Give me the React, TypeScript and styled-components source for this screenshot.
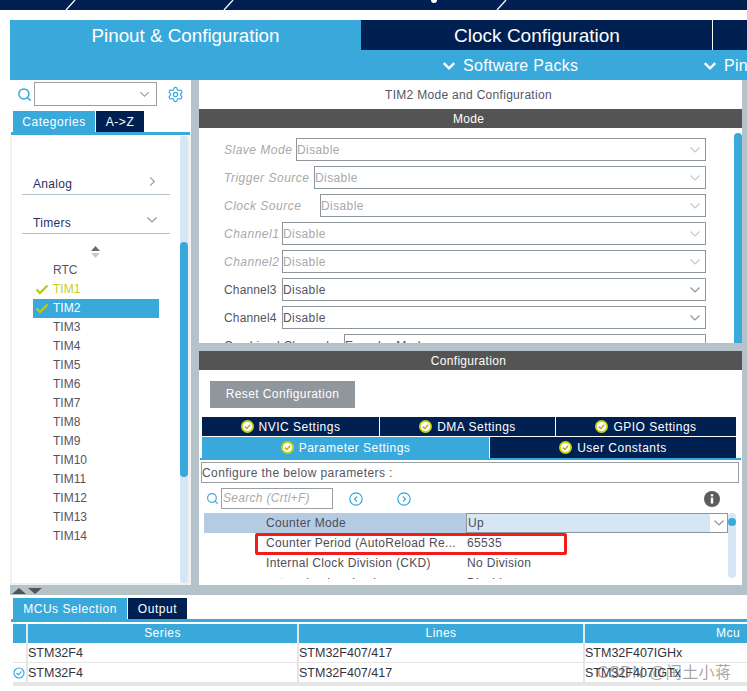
import React from "react";
import styled, { createGlobalStyle } from "styled-components";
import { Search, Settings } from "lucide-react";

const BLUE = "#39a9dc";
const NAVY = "#002052";
const DARK = "#535453";
const GUT = "#b6c2c9";
const FONT = `"Liberation Sans", Arial, sans-serif`;

const Global = createGlobalStyle`
  html, body { margin: 0; padding: 0; background: #fff; }
  * { box-sizing: border-box; }
`;

const Page = styled.div`
  width: 747px;
  height: 691px;
  overflow: hidden;
  background: #fff;
  font-family: ${FONT};
  font-size: 12px;
  color: #4d4d57;
`;

const TopBar = styled.div`
  height: 10px;
  margin-bottom: 10px;
  background: ${NAVY};
  svg { display: block; }
`;

const Header = styled.header`
  display: grid;
  grid-template-columns: 351px 1fr;
  margin-left: 10px;
  height: 60px;
  background: ${BLUE};
  color: #fff;
`;

const PinoutTab = styled.div`
  font-size: 18.8px;
  line-height: 32px;
  text-align: center;
`;

const HeaderRight = styled.div`
  display: flex;
  flex-direction: column;
  min-width: 0;
`;

const MainTabs = styled.div`
  display: flex;
  height: 30px;
  background: ${NAVY};
  padding-left: 1px;
`;

const ClockTab = styled.div`
  width: 351px;
  font-size: 19px;
  line-height: 32px;
  text-align: center;
  border-right: 1px solid #fff;
`;

const SubNav = styled.div`
  display: flex;
  height: 30px;
  padding: 2px 0 0 81px;
  align-items: center;
  font-size: 16px;
  letter-spacing: 0.3px;
  white-space: nowrap;
`;

const SubItem = styled.div<{ $w?: number }>`
  display: flex;
  align-items: center;
  gap: 7px;
  flex: none;
  width: ${(p) => (p.$w ? `${p.$w}px` : "auto")};
`;

const Workspace = styled.div`
  margin-left: 10px;
  background: ${GUT};
`;

const Panes = styled.div`
  display: flex;
  height: 505px;
  gap: 8px;
`;

const LeftPane = styled.aside`
  width: 181px;
  flex: none;
  background: #fff;
  display: flex;
  flex-direction: column;
`;

const SearchRow = styled.div`
  display: flex;
  align-items: center;
  height: 31px;
  padding: 1px 0 4px 7px;
  color: ${BLUE};
`;

const Combo = styled.div`
  width: 123px;
  height: 24px;
  margin-left: 2px;
  margin-right: 10px;
  border: 1px solid #9a9fa3;
  display: flex;
  align-items: center;
  justify-content: flex-end;
  padding-right: 6px;
`;

const TabStrip = styled.div<{ $ml: number }>`
  display: flex;
  gap: 1px;
  height: 21px;
  margin-left: ${(p) => p.$ml}px;
  flex: none;
`;

const Tab = styled.div<{ $active?: boolean; $w: number }>`
  width: ${(p) => p.$w}px;
  background: ${(p) => (p.$active ? BLUE : NAVY)};
  color: #fff;
  text-align: center;
  font-size: 12px;
  letter-spacing: 0.55px;
  line-height: 22px;
`;

const BlueLine = styled.div`
  height: 3px;
  margin: 0 1px;
  background: ${BLUE};
  flex: none;
`;

const ListArea = styled.div`
  flex: 1;
  display: flex;
  min-height: 0;
  margin-top: 1px;
  padding: 0 3px 2px 2px;
  background: #f1f1f1;
`;

const ListInner = styled.div`
  flex: 1;
  background: #fff;
  padding: 31px 0 0 10px;
`;

const ListScroll = styled.div`
  width: 8px;
  flex: none;
  border-radius: 4px;
  background: #d6e6f4;
  padding-top: 106px;
  div {
    height: 235px;
    border-radius: 4px;
    background: ${BLUE};
  }
`;

const Category = styled.div<{ $gap: number }>`
  width: 148px;
  height: 28px;
  display: flex;
  align-items: flex-end;
  justify-content: space-between;
  padding: 0 12px 3px 11px;
  margin-bottom: ${(p) => p.$gap}px;
  border-bottom: 1px solid #b6c2c9;
  color: #2c2c66;
  font-size: 12px;
  letter-spacing: 0.3px;
  svg { margin-bottom: 4px; }
`;

const SortArrows = styled.div`
  padding: 12px 0 0 69px;
  height: 27px;
  svg { display: block; }
`;

const TimerRow = styled.div<{ $selected?: boolean; $used?: boolean }>`
  position: relative;
  width: 126px;
  height: 19px;
  margin-left: 11px;
  padding-left: 20px;
  line-height: 19px;
  font-size: 12px;
  background: ${(p) => (p.$selected ? BLUE : "transparent")};
  color: ${(p) => (p.$selected ? "#fff" : p.$used ? "#c3cf16" : "#55555f")};
  svg { position: absolute; left: 2px; top: 4px; }
`;

const CenterCol = styled.main`
  width: 543px;
  flex: none;
  display: flex;
  flex-direction: column;
  gap: 8px;
`;

const TopPanel = styled.section`
  height: 263px;
  overflow: hidden;
  background: #fff;
  display: flex;
  flex-direction: column;
`;

const PanelTitle = styled.div`
  height: 29px;
  line-height: 30px;
  text-align: center;
  font-size: 12px;
  color: #55555f;
  letter-spacing: 0.3px;
  padding-right: 4px;
  flex: none;
`;

const DarkHeader = styled.div`
  height: 19px;
  line-height: 20px;
  padding-right: 4px;
  text-align: center;
  background: ${DARK};
  color: #fff;
  font-size: 12px;
  flex: none;
  letter-spacing: 0.3px;
`;

const ModeBody = styled.div`
  flex: 1;
  display: flex;
  min-height: 0;
  padding-top: 5px;
`;

const ModeRows = styled.div`
  flex: 1;
  padding: 5px 0 0 25px;
`;

const ModeRow = styled.div`
  display: flex;
  align-items: center;
  height: 23px;
  margin-bottom: 5px;
`;

const ModeLabel = styled.div<{ $w: number; $off?: boolean }>`
  width: ${(p) => p.$w}px;
  flex: none;
  white-space: nowrap;
  font-style: ${(p) => (p.$off ? "italic" : "normal")};
  letter-spacing: ${(p) => (p.$off ? "0.5px" : "0.15px")};
  color: ${(p) => (p.$off ? "#a8a8a8" : "#55555f")};
  font-size: 12px;
`;

const ModeSelect = styled.div<{ $off?: boolean }>`
  flex: 1;
  margin-right: 28px;
  height: 23px;
  border: 1px solid #8f969b;
  display: flex;
  align-items: center;
  justify-content: space-between;
  padding: 0 4px 0 0;
  font-size: 12px;
  letter-spacing: 0.4px;
  color: ${(p) => (p.$off ? "#a8a8a8" : "#55555f")};
`;

const ModeScroll = styled.div`
  width: 8px;
  flex: none;
  background: ${BLUE};
  border-radius: 4px 4px 0 0;
`;

const BottomPanel = styled.section`
  height: 234px;
  background: #fff;
  overflow: hidden;
  display: flex;
  flex-direction: column;
`;

const ResetButton = styled.div`
  width: 145px;
  height: 27px;
  flex: none;
  margin: 11px 0 9px 11px;
  background: #8f969c;
  color: #fff;
  font-size: 12px;
  letter-spacing: 0.4px;
  line-height: 27px;
  text-align: center;
`;

const SettingsTabs = styled.div`
  display: grid;
  grid-template-columns: 177px 175px 180px;
  grid-template-rows: 19px;
  gap: 1px;
  margin-left: 3px;
  flex: none;
`;

const SettingsTabs2 = styled.div`
  display: grid;
  grid-template-columns: 287px 246px;
  gap: 1px;
  margin: 1px 0 0 3px;
  flex: none;
  height: 21px;
`;

const SetTab = styled.div<{ $active?: boolean }>`
  display: flex;
  align-items: center;
  justify-content: center;
  gap: 5px;
  background: ${(p) => (p.$active ? BLUE : NAVY)};
  color: #fff;
  font-size: 12px;
  letter-spacing: 0.5px;
`;

const ThinLine = styled.div`
  height: 2px;
  margin: 0 1px;
  background: ${BLUE};
  flex: none;
`;

const ConfigureBox = styled.div`
  height: 21px;
  margin: 2px 3px 0 2px;
  border: 1px solid #9a9fa3;
  line-height: 20px;
  font-size: 12px;
  letter-spacing: 0.42px;
  color: #55555f;
  flex: none;
`;

const ParamToolbar = styled.div`
  height: 30px;
  display: flex;
  align-items: center;
  padding: 1px 0 0 7px;
  flex: none;
  color: ${BLUE};
`;

const ParamSearch = styled.div`
  width: 112px;
  height: 21px;
  margin: 0 16px 0 2px;
  border: 1px solid #9a9fa3;
  font-style: italic;
  font-size: 12px;
  letter-spacing: 0.3px;
  line-height: 19px;
  padding-left: 1px;
  color: #aaa;
`;

const CircleGap = styled.div`
  width: 34px;
  flex: none;
`;

const InfoSlot = styled.div`
  margin-left: 293px;
  display: flex;
`;

const ParamBody = styled.div`
  flex: 1;
  display: flex;
  min-height: 0;
  padding: 0 6px 6px 5px;
`;

const ParamTable = styled.div`
  position: relative;
  width: 524px;
  flex: none;
  overflow: hidden;
`;

const ParamRow = styled.div<{ $head?: boolean }>`
  display: grid;
  grid-template-columns: 262px 1fr;
  height: 20px;
  line-height: 19px;
  font-size: 12px;
  letter-spacing: 0.33px;
  color: #4d4d57;
  background: ${(p) => (p.$head ? "#b5cbe2" : "transparent")};
`;

const ParamName = styled.div`
  padding: 1px 0 0 62px;
  white-space: nowrap;
`;

const ParamValue = styled.div`
  padding: 1px 0 0 1px;
  white-space: nowrap;
`;

const ParamSelect = styled.div`
  display: flex;
  justify-content: space-between;
  height: 20px;
  border: 1px solid #8f969b;
  background: #d6e6f4;
  padding-left: 1px;
  line-height: 18px;
`;

const ChevronBox = styled.div`
  width: 17px;
  background: #fff;
  display: flex;
  align-items: center;
  justify-content: center;
`;

const Highlight = styled.div`
  position: absolute;
  left: 51px;
  top: 20px;
  width: 312px;
  height: 22px;
  border: 3px solid #f11c1c;
  border-radius: 2px;
`;

const ParamScroll = styled.div`
  width: 8px;
  flex: none;
  height: 65px;
  background: #d6e6f4;
  border-radius: 4px;
  padding-top: 5px;
  div {
    height: 8px;
    border-radius: 50%;
    background: ${BLUE};
  }
`;

const RightGutter = styled.div`
  flex: 1;
  overflow: hidden;
  svg { display: block; margin-top: 5px; }
`;

const Splitter = styled.div`
  height: 10px;
  padding: 3px 0 0 2px;
  svg { display: block; }
`;

const Dock = styled.section`
  position: relative;
  margin-left: 10px;
  padding-top: 3px;
  height: 91px;
`;

const DockBlueLine = styled.div`
  height: 3px;
  margin: 0 0 2px 1px;
  background: ${BLUE};
`;

const McuTable = styled.div`
  display: grid;
  grid-template-columns: 13px 269px 284px 286px;
  grid-auto-rows: 19px 20px 20px;
  column-gap: 2px;
  padding: 0 0 3px 3px;
  width: max-content;
  background: linear-gradient(#fff, #fff) left top / 3px 100% no-repeat, #e6e6e6;
`;

const HeadCell = styled.div`
  background: ${BLUE};
  color: #fff;
  font-size: 12px;
  letter-spacing: 0.45px;
  line-height: 19px;
  text-align: center;
`;

const BodyCell = styled.div`
  background: #fff;
  margin-bottom: 1px;
  padding-top: 1px;
  color: #33333b;
  font-size: 12.5px;
  line-height: 19px;
  display: flex;
  align-items: center;
  white-space: nowrap;
  overflow: hidden;
`;

const Watermark = styled.div`
  position: absolute;
  left: 587px;
  top: 69px;
  font-size: 16px;
  line-height: 18px;
  letter-spacing: 0.45px;
  white-space: nowrap;
  color: rgba(90, 90, 90, 0.55);
  font-family: "Liberation Sans", "Noto Sans CJK SC", sans-serif;
`;

const Chev = ({ dir = "down", size = 12, color = "#8f969b", w = 1.2 }: { dir?: "down" | "right"; size?: number; color?: string; w?: number }) => (
  <svg width={size} height={size} viewBox="0 0 12 12" fill="none" stroke={color} strokeWidth={w}>
    <polyline points={dir === "down" ? "1.5,3.5 6,8 10.5,3.5" : "3.5,1.5 8,6 3.5,10.5"} />
  </svg>
);

const Tick = ({ color = "#bccb10" }: { color?: string }) => (
  <svg width="14" height="11" viewBox="0 0 14 11" fill="none" stroke={color} strokeWidth="2.4">
    <polyline points="1.5,5.5 5,9 12.5,1.5" />
  </svg>
);

const OkBadge = () => (
  <svg width="13" height="13" viewBox="0 0 13 13">
    <circle cx="6.5" cy="6.5" r="6.5" fill="#c6d313" />
    <circle cx="6.5" cy="6.5" r="4.6" fill="#fff" />
    <polyline points="3.8,6.6 5.8,8.5 9.2,4.8" fill="none" stroke="#a9b70f" strokeWidth="1.5" />
  </svg>
);

const CircleArrow = ({ left }: { left?: boolean }) => (
  <svg width="14" height="14" viewBox="0 0 14 14" fill="none" stroke={BLUE} strokeWidth="1.2">
    <circle cx="7" cy="7" r="6.2" />
    <polyline points={left ? "8,4.5 5.5,7 8,9.5" : "6,4.5 8.5,7 6,9.5"} />
  </svg>
);

const InfoIcon = () => (
  <svg width="16" height="16" viewBox="0 0 16 16">
    <circle cx="8" cy="8" r="8" fill="#5c5c5c" />
    <rect x="6.8" y="6.6" width="2.4" height="6" fill="#fff" />
    <rect x="6.8" y="3.2" width="2.4" height="2.2" fill="#fff" />
  </svg>
);

const modeRows = [
  { label: "Slave Mode", w: 72, off: true },
  { label: "Trigger Source", w: 90, off: true },
  { label: "Clock Source", w: 96, off: true },
  { label: "Channel1", w: 58, off: true },
  { label: "Channel2", w: 58, off: true },
  { label: "Channel3", w: 58 },
  { label: "Channel4", w: 58 },
];

const timers = ["TIM3", "TIM4", "TIM5", "TIM6", "TIM7", "TIM8", "TIM9", "TIM10", "TIM11", "TIM12", "TIM13", "TIM14"];

export default function App() {
  return (
    <Page>
      <Global />
      <TopBar>
        <svg width="747" height="10" viewBox="0 0 747 10">
          <g stroke="#fff" strokeWidth="1.3">
            <line x1="66" y1="10" x2="75" y2="0" />
            <line x1="224" y1="10" x2="233" y2="0" />
            <line x1="497" y1="10" x2="506" y2="0" />
          </g>
          <circle cx="434" cy="0" r="3" fill="#fff" />
        </svg>
      </TopBar>
      <Header>
        <PinoutTab>Pinout &amp; Configuration</PinoutTab>
        <HeaderRight>
          <MainTabs>
            <ClockTab>Clock Configuration</ClockTab>
          </MainTabs>
          <SubNav>
            <SubItem $w={261}>
              <Chev size={14} color="#fff" w={2} />
              Software Packs
            </SubItem>
            <SubItem>
              <Chev size={14} color="#fff" w={2} />
              Pinout
            </SubItem>
          </SubNav>
        </HeaderRight>
      </Header>
      <Workspace>
        <Panes>
          <LeftPane>
            <SearchRow>
              <Search size={15} strokeWidth={2.4} />
              <Combo>
                <Chev size={11} />
              </Combo>
              <Settings size={17} strokeWidth={1.7} />
            </SearchRow>
            <TabStrip $ml={3}>
              <Tab $active $w={82}>Categories</Tab>
              <Tab $w={48}>A-&gt;Z</Tab>
            </TabStrip>
            <BlueLine />
            <ListArea>
              <ListInner>
                <Category $gap={11}>
                  Analog
                  <Chev dir="right" size={11} />
                </Category>
                <Category $gap={0}>
                  Timers
                  <Chev size={12} />
                </Category>
                <SortArrows>
                  <svg width="9" height="12" viewBox="0 0 9 12">
                    <polygon points="4.5,0 9,5 0,5" fill="#6a6a6a" />
                    <polygon points="0,7 9,7 4.5,12" fill="#c8c8c8" />
                  </svg>
                </SortArrows>
                <TimerRow>RTC</TimerRow>
                <TimerRow $used><Tick />TIM1</TimerRow>
                <TimerRow $selected><Tick />TIM2</TimerRow>
                {timers.map((t) => (
                  <TimerRow key={t}>{t}</TimerRow>
                ))}
              </ListInner>
              <ListScroll><div /></ListScroll>
            </ListArea>
          </LeftPane>
          <CenterCol>
            <TopPanel>
              <PanelTitle>TIM2 Mode and Configuration</PanelTitle>
              <DarkHeader>Mode</DarkHeader>
              <ModeBody>
                <ModeRows>
                  {modeRows.map((r) => (
                    <ModeRow key={r.label}>
                      <ModeLabel $w={r.w} $off={r.off}>{r.label}</ModeLabel>
                      <ModeSelect $off={r.off}>
                        Disable
                        <Chev size={12} color={r.off ? "#c8c8c8" : "#8f969b"} />
                      </ModeSelect>
                    </ModeRow>
                  ))}
                  <ModeRow>
                    <ModeLabel $w={120}>Combined Channels</ModeLabel>
                    <ModeSelect>Encoder Mode</ModeSelect>
                  </ModeRow>
                </ModeRows>
                <ModeScroll />
              </ModeBody>
            </TopPanel>
            <BottomPanel>
              <DarkHeader>Configuration</DarkHeader>
              <ResetButton>Reset Configuration</ResetButton>
              <SettingsTabs>
                <SetTab><OkBadge />NVIC Settings</SetTab>
                <SetTab><OkBadge />DMA Settings</SetTab>
                <SetTab><OkBadge />GPIO Settings</SetTab>
              </SettingsTabs>
              <SettingsTabs2>
                <SetTab $active><OkBadge />Parameter Settings</SetTab>
                <SetTab><OkBadge />User Constants</SetTab>
              </SettingsTabs2>
              <ThinLine />
              <ConfigureBox>Configure the below parameters :</ConfigureBox>
              <ParamToolbar>
                <Search size={13} strokeWidth={2.2} />
                <ParamSearch>Search (Crtl+F)</ParamSearch>
                <CircleArrow left />
                <CircleGap />
                <CircleArrow />
                <InfoSlot><InfoIcon /></InfoSlot>
              </ParamToolbar>
              <ParamBody>
                <ParamTable>
                  <ParamRow $head>
                    <ParamName>Counter Mode</ParamName>
                    <ParamSelect>
                      Up
                      <ChevronBox><Chev size={12} /></ChevronBox>
                    </ParamSelect>
                  </ParamRow>
                  <ParamRow>
                    <ParamName>Counter Period (AutoReload Re...</ParamName>
                    <ParamValue>65535</ParamValue>
                  </ParamRow>
                  <ParamRow>
                    <ParamName>Internal Clock Division (CKD)</ParamName>
                    <ParamValue>No Division</ParamValue>
                  </ParamRow>
                  <ParamRow>
                    <ParamName>auto-reload preload</ParamName>
                    <ParamValue>Disable</ParamValue>
                  </ParamRow>
                  <Highlight />
                </ParamTable>
                <ParamScroll><div /></ParamScroll>
              </ParamBody>
            </BottomPanel>
          </CenterCol>
          <RightGutter>
            <svg width="5" height="30" viewBox="0 0 5 30">
              <polygon points="5,0 0,4 5,8" fill="#4f4f4f" />
              <polygon points="0,13 5,19 0,25" fill="#4f4f4f" />
            </svg>
          </RightGutter>
        </Panes>
        <Splitter>
          <svg width="30" height="6" viewBox="0 0 30 6">
            <polygon points="7,0 14,6 0,6" fill="#4f5558" />
            <polygon points="16,0 30,0 23,6" fill="#4f5558" />
          </svg>
        </Splitter>
      </Workspace>
      <Dock>
        <TabStrip $ml={3}>
          <Tab $active $w={114}>MCUs Selection</Tab>
          <Tab $w={59}>Output</Tab>
        </TabStrip>
        <DockBlueLine />
        <McuTable>
          <HeadCell />
          <HeadCell>Series</HeadCell>
          <HeadCell>Lines</HeadCell>
          <HeadCell>Mcu</HeadCell>
          <BodyCell />
          <BodyCell>STM32F4</BodyCell>
          <BodyCell>STM32F407/417</BodyCell>
          <BodyCell>STM32F407IGHx</BodyCell>
          <BodyCell>
            <svg width="12" height="12" viewBox="0 0 12 12" fill="none" stroke={BLUE} strokeWidth="1.2">
              <circle cx="6" cy="6" r="5" />
              <polyline points="3.5,6 5.4,7.8 8.6,4.4" />
            </svg>
          </BodyCell>
          <BodyCell>STM32F4</BodyCell>
          <BodyCell>STM32F407/417</BodyCell>
          <BodyCell>STM32F407IGTx</BodyCell>
        </McuTable>
        <Watermark>CSDN @闰土小蒋</Watermark>
      </Dock>
    </Page>
  );
}
